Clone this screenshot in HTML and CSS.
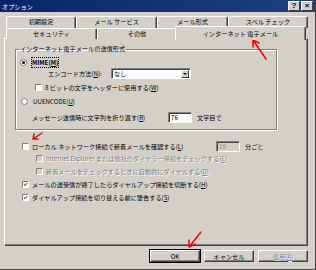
FILE: index.html
```html
<!DOCTYPE html>
<html lang="ja">
<head>
  <meta charset="UTF-8" />
  <title>オプション</title>
  <link rel="stylesheet" href="styles.css">
</head>
<body>
  <div class="dialog">
    <div class="titlebar">
      <span class="title">オプション</span>
      <span class="tbtn">?</span>
      <span class="tbtn">×</span>
    </div>

    <!-- Tabs -->
    <div class="tabs">
      <div class="tab-row">
        <div class="tab w70">初期設定</div>
        <div class="tab w81">メール サービス</div>
        <div class="tab w71">メール形式</div>
        <div class="tab w80">スペル チェック</div>
      </div>
      <div class="tab-row">
        <div class="tab w91">セキュリティ</div>
        <div class="tab w80">その他</div>
        <div class="tab w131 active">インターネット 電子メール</div>
      </div>
    </div>

    <!-- Page -->
    <div class="panel">
      <fieldset class="group">
        <legend>インターネット電子メールの送信形式</legend>
        <div class="row r-mime">
          <span class="radio on"></span>
          <span class="label bold focus">MIME(<u>M</u>)</span>
        </div>
        <div class="row r-enc">
          <span class="enc-label">エンコード方法(<u>N</u>):</span>
          <span class="combo"><span class="combo-text">なし</span><span class="combo-btn"></span></span>
        </div>
        <div class="row r-8bit">
          <span class="chk"></span>
          <span class="label">8 ビットの文字をヘッダーに使用する(<u>W</u>)</span>
        </div>
        <div class="row r-uu">
          <span class="radio"></span>
          <span class="label">UUENCODE(<u>U</u>)</span>
        </div>
        <div class="row r-wrap">
          <span class="wrap-label">メッセージ送信時に文字列を折り返す(<u>R</u>)</span>
          <span class="field">76</span>
          <span class="after">文字目で</span>
        </div>
      </fieldset>

      <div class="row r-local">
        <span class="chk"></span>
        <span class="local-label">ローカル ネットワーク接続で新着メールを確認する(<u>L</u>)</span>
        <span class="field disabled">10</span>
        <span class="after">分ごと</span>
      </div>
      <div class="row r-sub first">
        <span class="chk off"></span>
        <span class="label dim">Internet Explorer または他社のダイヤラー接続をチェックする(<u>E</u>)</span>
      </div>
      <div class="row r-sub">
        <span class="chk off"></span>
        <span class="label dim">新着メールをチェックするときに自動的にダイヤルする(<u>D</u>)</span>
      </div>
      <div class="row r-top">
        <span class="chk"><svg viewBox="0 0 7 7"><path d="M1 3.2 L2.8 5 L6 1.6" /></svg></span>
        <span class="label">メールの送受信が終了したらダイヤルアップ接続を切断する(<u>H</u>)</span>
      </div>
      <div class="row r-top">
        <span class="chk"><svg viewBox="0 0 7 7"><path d="M1 3.2 L2.8 5 L6 1.6" /></svg></span>
        <span class="label">ダイヤルアップ接続を切り替える前に警告する(<u>S</u>)</span>
      </div>
    </div>

    <div class="buttons">
      <button class="btn default">OK</button>
      <button class="btn">キャンセル</button>
      <button class="btn dim" disabled>適用(<u>A</u>)</button>
    </div>

    <!-- red hand-drawn arrows over the screenshot -->
    <svg class="marks" viewBox="0 0 316 270">
      <path d="M266 59 L253 40 M253 40 L253 47 M253 40 L259 43" />
      <path d="M42 133 L33 139 M33 139 L34 134 M33 139 L38 139" />
      <path d="M201 232 L189 247 M189 247 L189 240 M189 247 L195 244" />
    </svg>
  </div>
</body>
</html>
```

FILE: styles.css
```css
body {
  margin: 0;
  width: 316px;
  height: 270px;
  overflow: hidden;
  font-family: "Noto Sans CJK JP", "Liberation Sans", sans-serif;
  font-size: 6.2px;
  color: #000;
}
.dialog {
  position: relative;
  width: 316px;
  height: 270px;
  box-sizing: border-box;
  background: #d4d0c8;
  border-right: 1px solid #404040;
  border-bottom: 1px solid #404040;
  display: flex;
  flex-direction: column;
}
.titlebar {
  height: 12px;
  flex: none;
  display: flex;
  align-items: center;
  padding: 0 2px 0 2px;
  background: linear-gradient(to right, #0a246a, #20407c);
  color: #fff;
}
.title {
  flex: 1;
}
.tbtn {
  width: 10px;
  height: 8px;
  margin-left: 1px;
  background: #d4d0c8;
  border: 1px solid;
  border-color: #fff #404040 #404040 #fff;
  color: #000;
  font: bold 8px/8px "Liberation Sans", sans-serif;
  text-align: center;
}

/* tabs */
.tabs {
  margin: 4px 0 -1px 6px;
  position: relative;
  z-index: 1;
}
.tab-row {
  display: flex;
  height: 12px;
}
.tab-row + .tab-row {
  height: 11px;
}
.tab {
  box-sizing: border-box;
  height: 100%;
  border-top: 1px solid #fff;
  border-left: 1px solid #fff;
  border-right: 1px solid #404040;
  box-shadow: inset -1px 0 #808080;
  border-radius: 2px 2px 0 0;
  background: #d4d0c8;
  text-align: center;
  line-height: 10px;
}
.tab.active {
  height: 14px;
  margin: -2px -2px 0 -2px;
  line-height: 13px;
}
.w70 { width: 70px; }
.w71 { width: 71px; }
.w80 { width: 80px; }
.w81 { width: 81px; }
.w91 { width: 91px; }
.w131 { width: 131px; }

/* page */
.panel {
  flex: 1;
  margin: 0 7px 0 4px;
  border: 1px solid;
  border-color: #fff #404040 #404040 #fff;
  box-shadow: inset -1px -1px #808080;
}
.group {
  width: 262px;
  box-sizing: border-box;
  margin: 6px 0 0 10px;
  padding: 0 0 6px 0;
  border: 1px solid #808080;
  box-shadow: inset 1px 1px #fff, 1px 1px #fff;
}
.group legend {
  margin-left: 3px;
  padding: 0 1px;
  line-height: 8px;
}
.row {
  display: flex;
  align-items: center;
  height: 10px;
  white-space: nowrap;
}
.row > span {
  flex: none;
}
.r-mime { margin-top: 4px; padding-left: 4px; }
.r-enc { margin-top: 1px; height: 11px; padding-left: 32px; }
.r-8bit { margin-top: 3px; padding-left: 19px; }
.r-uu { margin-top: 4px; padding-left: 5px; }
.r-wrap { margin-top: 6px; height: 11px; padding-left: 16px; }
.r-local { margin-top: 11px; padding-left: 17px; }
.r-sub { margin-top: 4px; height: 9px; padding-left: 31px; }
.r-sub.first { margin-top: 3px; }
.r-top { margin-top: 4px; height: 9px; padding-left: 17px; }

.label {
  margin-left: 3px;
}
.radio + .label {
  margin-left: 5px;
}
.bold {
  font-weight: bold;
}
.focus {
  outline: 1px dotted #000;
}
.dim {
  color: #808080;
  text-shadow: 1px 1px 0 #fff;
}
.dim u {
  text-decoration-color: #808080;
}

.radio {
  width: 7px;
  height: 7px;
  box-sizing: border-box;
  border-radius: 50%;
  border: 1px solid #808080;
  background: #fff;
  display: flex;
  align-items: center;
  justify-content: center;
}
.radio.on::after {
  content: "";
  width: 3px;
  height: 3px;
  border-radius: 50%;
  background: #000;
}
.chk {
  width: 7px;
  height: 7px;
  box-sizing: border-box;
  border: 1px solid;
  border-color: #808080 #fff #fff #808080;
  background: #fff;
  display: flex;
}
.chk.off {
  background: #d4d0c8;
}
.chk svg {
  width: 5px;
  height: 5px;
}
.chk path {
  fill: none;
  stroke: #000;
  stroke-width: 1.3;
}

.enc-label {
  width: 63px;
}
.combo {
  width: 80px;
  height: 11px;
  box-sizing: border-box;
  border: 1px solid;
  border-color: #808080 #fff #fff #808080;
  box-shadow: inset 1px 1px #404040;
  background: #fff;
  display: flex;
  align-items: center;
}
.combo-text {
  flex: 1;
  padding-left: 2px;
}
.combo-btn {
  width: 8px;
  height: 8px;
  margin-right: 1px;
  box-sizing: border-box;
  border: 1px solid;
  border-color: #fff #404040 #404040 #fff;
  background: #d4d0c8;
  display: flex;
  align-items: center;
  justify-content: center;
}
.combo-btn::after {
  content: "";
  border-left: 2px solid transparent;
  border-right: 2px solid transparent;
  border-top: 2px solid #000;
}
.wrap-label {
  width: 136px;
}
.local-label {
  margin-left: 3px;
  width: 184px;
}
.field {
  width: 24px;
  height: 11px;
  box-sizing: border-box;
  border: 1px solid;
  border-color: #808080 #fff #fff #808080;
  box-shadow: inset 1px 1px #404040;
  background: #fff;
  padding-left: 2px;
  line-height: 9px;
}
.field.disabled {
  background: #d4d0c8;
  color: #808080;
}
.after {
  margin-left: 5px;
}

/* bottom buttons */
.buttons {
  flex: none;
  display: flex;
  justify-content: flex-end;
  gap: 4px;
  margin: 4px 7px 7px 0;
}
.btn {
  width: 50px;
  height: 12px;
  padding: 0;
  font: inherit;
  color: #000;
  background: #d4d0c8;
  border: 1px solid;
  border-color: #fff #404040 #404040 #fff;
  box-shadow: inset -1px -1px #808080;
}
.btn.default {
  outline: 1px solid #000;
}
.btn.dim {
  color: #808080;
}

.marks {
  position: absolute;
  left: 0;
  top: 0;
  width: 316px;
  height: 270px;
  pointer-events: none;
}
.marks path {
  fill: none;
  stroke: #f00;
  stroke-width: 1.5;
  stroke-linecap: round;
}
```
